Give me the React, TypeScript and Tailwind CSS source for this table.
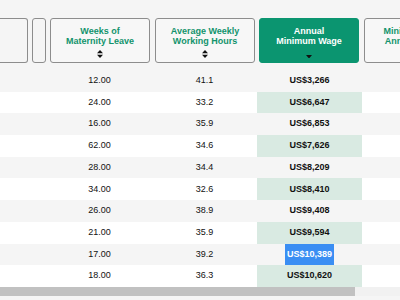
import { useState } from "react";

type Row = { weeks: string; hours: string; wage: string };

const rows: Row[] = [
  { weeks: "12.00", hours: "41.1", wage: "US$3,266" },
  { weeks: "24.00", hours: "33.2", wage: "US$6,647" },
  { weeks: "16.00", hours: "35.9", wage: "US$6,853" },
  { weeks: "62.00", hours: "34.6", wage: "US$7,626" },
  { weeks: "28.00", hours: "34.4", wage: "US$8,209" },
  { weeks: "34.00", hours: "32.6", wage: "US$8,410" },
  { weeks: "26.00", hours: "38.9", wage: "US$9,408" },
  { weeks: "21.00", hours: "35.9", wage: "US$9,594" },
  { weeks: "17.00", hours: "39.2", wage: "US$10,389" },
  { weeks: "18.00", hours: "36.3", wage: "US$10,620" },
];

function SortIcon() {
  return (
    <svg width="6" height="8" viewBox="0 0 6 8" className="block">
      <path d="M3 0 L6 3.3 H0 Z" fill="#111" />
      <path d="M3 8 L6 4.7 H0 Z" fill="#111" />
    </svg>
  );
}

function DownIcon() {
  return (
    <svg width="6" height="3.5" viewBox="0 0 6 3.5" className="block">
      <path d="M0 0 H6 L3 3.5 Z" fill="#111" />
    </svg>
  );
}

function HeaderBox({ lines, active }: { lines: string[]; active?: boolean }) {
  return (
    <div
      className={
        active
          ? "flex h-[45px] w-[100px] shrink-0 flex-col items-center rounded-[3px] border border-[#0b9570] bg-[#0b9570] pt-[7px] text-white"
          : "flex h-[45px] w-[100px] shrink-0 flex-col items-center rounded-[3px] border border-[#8d8d8d] bg-[#f7f7f7] pt-[7px] text-[#12936c]"
      }
    >
      <div className="text-center text-[9px] leading-[10px] font-bold">
        {lines.map((l) => (
          <div key={l} className="whitespace-nowrap">
            {l}
          </div>
        ))}
      </div>
      <div className="mt-[3px] flex h-[9px] items-end">{active ? <DownIcon /> : <SortIcon />}</div>
    </div>
  );
}

export default function App() {
  const [selected] = useState(8);

  return (
    <div
      className="h-[300px] w-[400px] overflow-hidden bg-[#f5f5f5] text-[#111]"
      style={{ fontFamily: "'Liberation Sans', Arial, sans-serif" }}
    >
      <div className="flex pt-[18px] pb-[7px]">
        <div className="h-[45px] w-[28px] shrink-0 rounded-r-[3px] border border-l-0 border-[#8d8d8d]" />
        <div className="ml-[4px] h-[45px] w-[14px] shrink-0 rounded-[3px] border border-[#8d8d8d]" />
        <div className="ml-[4px] shrink-0">
          <HeaderBox lines={["Weeks of", "Maternity Leave"]} />
        </div>
        <div className="ml-[5px] shrink-0">
          <HeaderBox lines={["Average Weekly", "Working Hours"]} />
        </div>
        <div className="ml-[4px] shrink-0">
          <HeaderBox lines={["Annual", "Minimum Wage"]} active />
        </div>
        <div className="ml-[5px] shrink-0">
          <HeaderBox lines={["Minimum Paid", "Annual Leave"]} />
        </div>
      </div>

      <div>
        {rows.map((r, i) => {
          const odd = i % 2 === 1;
          return (
            <div
              key={r.wage}
              className={`flex h-[21.7px] text-[9px] ${odd ? "bg-white" : "bg-[#f5f5f5]"}`}
            >
              <div className="w-[47px] shrink-0" />
              <div className="flex w-[105px] shrink-0 items-center justify-center">{r.weeks}</div>
              <div className="flex w-[105px] shrink-0 items-center justify-center">{r.hours}</div>
              <div
                className={`flex w-[105px] shrink-0 items-center justify-center font-bold ${
                  odd ? "bg-[#d9eae2]" : ""
                }`}
              >
                {i === selected ? (
                  <span className="flex h-full items-center bg-[#3a8ef3] px-[2px] text-white">{r.wage}</span>
                ) : (
                  r.wage
                )}
              </div>
            </div>
          );
        })}
      </div>

      <div className="h-[9px] bg-[#f1f1f1]">
        <div className="h-full w-[355px] bg-[#c1c1c1]" />
      </div>
    </div>
  );
}
